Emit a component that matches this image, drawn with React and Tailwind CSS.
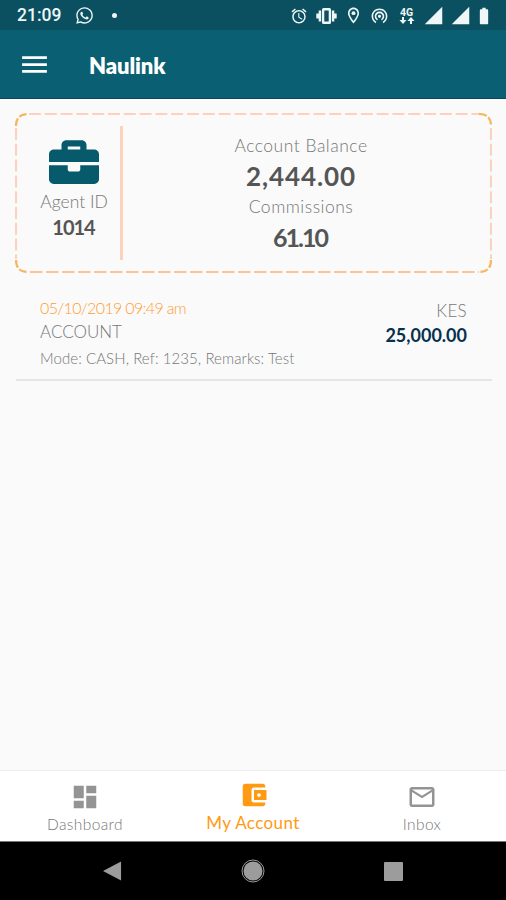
import { FaBriefcase, FaWhatsapp } from "react-icons/fa";
import {
  MdAccountBalanceWallet,
  MdAlarm,
  MdBatteryFull,
  MdDashboard,
  MdMenu,
  MdOutlineLocationOn,
  MdOutlineMail,
  MdSignalCellular4Bar,
  MdWifiTethering,
} from "react-icons/md";

function StatusBar() {
  return (
    <div className="flex h-[30px] items-center justify-between bg-[#0a5060] pt-[1px] pl-[17px] pr-[12px] text-[#eef6f7]">
      <div className="flex items-center">
        <span className="font-[Roboto] text-[17.5px] font-medium">21:09</span>
        <FaWhatsapp className="ml-[14px] size-[19px]" />
        <span className="ml-[18px] size-[5px] rounded-full bg-current" />
      </div>
      <div className="flex items-center">
        <MdAlarm className="size-[18px]" />
        <svg viewBox="0 0 21 16" className="ml-[8px] h-[16px] w-[21px]" fill="currentColor">
          <path d="M7.5 0h6q1.5 0 1.5 1.5v13q0 1.5-1.5 1.5h-6Q6 16 6 14.500v-13Q6 0 7.500 0zM8.300 2.500v11h4.400v-11z" fillRule="evenodd" />
          <path d="M2.700 2.500h2.500v11H2.700zM0.300 5.500h3v5h-3zM15.800 2.500h2.500v11h-2.500zM17.700 5.500h3v5h-3z" />
        </svg>
        <MdOutlineLocationOn className="ml-[7px] size-[19px]" />
        <MdWifiTethering className="ml-[7px] size-[19px]" />
        <div className="ml-[9px] flex w-[17px] flex-col items-center font-[Roboto] text-[10.5px] leading-[9px] font-bold">
          <span>4G</span>
          <svg viewBox="0 0 16 7" className="h-[7px] w-[16px]" fill="currentColor">
            <path d="M3 0h2v3h2.500L4 7 .5 3H3zM11 7h2V4h2.500L12 0 8.500 4H11z" />
          </svg>
        </div>
        <MdSignalCellular4Bar className="ml-[8px] size-[21px]" />
        <MdSignalCellular4Bar className="ml-[6px] size-[21px]" />
        <MdBatteryFull className="ml-[3px] size-[20px]" />
      </div>
    </div>
  );
}

function Header() {
  return (
    <div className="flex h-[69px] items-center border-b border-[#08475a] bg-[#0a5f72] pl-[18px] pt-[1px] text-white">
      <MdMenu className="size-[33px]" />
      <h1 className="ml-[38px] pt-[2px] text-[22px] font-extrabold tracking-[-0.100px]">Naulink</h1>
    </div>
  );
}

function CardBorder() {
  return (
    <svg viewBox="0 0 477 160" className="absolute inset-0 size-full" fill="none" strokeWidth="2.2">
      <g stroke="#fdd2bd" strokeDasharray="12 3.800">
        <path d="M14 1H464" />
        <path d="M1 15V146" />
        <path d="M476 15V146" />
      </g>
      <path d="M15 159H464" stroke="#f8c49c" strokeDasharray="12.500 3.500" />
      <g stroke="#f4b65f" strokeDasharray="8 2">
        <path d="M1 13Q1 1 13 1" />
        <path d="M464 1Q476 1 476 13" />
        <path d="M1 147Q1 159 13 159" />
        <path d="M476 147Q476 159 464 159" />
      </g>
    </svg>
  );
}

function BalanceCard() {
  return (
    <div className="relative mr-[14px] ml-[15px] mt-[14px] flex h-[160px]">
      <CardBorder />
      <div className="flex w-[105px] flex-col items-center pl-[13px] pt-[24px]">
        <FaBriefcase className="size-[50px] text-[#07596c]" />
        <span className="mt-[3px] text-[17.5px] leading-[24px] font-light text-[#777]">Agent ID</span>
        <span className="pr-[1px] text-[20px] leading-[27px] font-bold tracking-[-1.600px] text-[#555]">
          <span className="tracking-[-1px]">1014</span>
        </span>
      </div>
      <div className="my-[13px] w-[3px] bg-[#fdd2bd]" />
      <div className="flex flex-1 flex-col items-center pr-[13px] pt-[21px] text-[#777]">
        <span className="text-[17.5px] leading-[24px] font-light tracking-[0.500px]">Account Balance</span>
        <span className="text-[26px] leading-[37px] font-bold tracking-[0.900px] text-[#555]">2,444.00</span>
        <span className="text-[17.5px] leading-[24px] font-light tracking-[0.500px]">Commissions</span>
        <span className="pr-[2px] text-[25px] leading-[36px] font-bold tracking-[-2px] text-[#555]">61.10</span>
      </div>
    </div>
  );
}

function Transaction() {
  return (
    <div className="mr-[14px] ml-[16px] mt-[23px] flex h-[85px] justify-between border-b-2 border-[#e5e5e5] pr-[25px] pl-[24px] text-[#777]">
      <div className="flex flex-col">
        <span className="text-[16px] leading-[24px] font-light tracking-[-0.650px] text-[#ff9d35]">05/10/2019 09:49 am</span>
        <span className="text-[17px] leading-[23px] font-light">ACCOUNT</span>
        <span className="mt-[2px] text-[15px] leading-[26px] font-light tracking-[0.080px]">Mode: CASH, Ref: 1235, Remarks: Test</span>
      </div>
      <div className="flex flex-col items-end pt-[3px]">
        <span className="text-[17px] leading-[24px] font-light tracking-[0.300px]">KES</span>
        <span className="text-[18px] leading-[24px] font-bold text-[#07304f]">25,000.00</span>
      </div>
    </div>
  );
}

function TabBar() {
  return (
    <div className="flex h-[71px] border-t border-[#eee] bg-white text-[#949494]">
      <div className="flex flex-1 flex-col items-center pt-[11px] pl-[1px]">
        <MdDashboard className="size-[30px]" />
        <span className="text-[15.5px] leading-[24px] font-light tracking-[0.400px] text-[#777]">Dashboard</span>
      </div>
      <div className="flex flex-1 flex-col items-center pt-[9px] text-[#ff9a12]">
        <MdAccountBalanceWallet className="ml-[2px] size-[30px]" />
        <span className="mt-[1px] text-[17px] leading-[24px] tracking-[0.400px]">My Account</span>
      </div>
      <div className="flex flex-1 flex-col items-center pt-[11px] pl-[1px]">
        <MdOutlineMail className="size-[30px]" />
        <span className="text-[15.5px] leading-[24px] font-light tracking-[0.400px] text-[#777]">Inbox</span>
      </div>
    </div>
  );
}

function NavBar() {
  return (
    <div className="flex h-[59px] items-center justify-between border-t border-[#777] bg-black px-[103px]">
      <svg viewBox="0 0 20 22" className="h-[22px] w-[19px]" fill="#9c9c9c">
        <path d="M0 11 19 1v20z" />
      </svg>
      <svg viewBox="0 0 24 24" className="size-[24px]">
        <circle cx="12" cy="12" r="11" fill="none" stroke="#9c9c9c" />
        <circle cx="12" cy="12" r="9.500" fill="#9c9c9c" />
      </svg>
      <span className="size-[19px] rounded-[1px] bg-[#9c9c9c]" />
    </div>
  );
}

function App() {
  return (
    <div className="flex h-[900px] w-[506px] flex-col bg-[#fafafa] font-[Lato,sans-serif]">
      <StatusBar />
      <Header />
      <div className="flex-1">
        <BalanceCard />
        <Transaction />
      </div>
      <TabBar />
      <NavBar />
    </div>
  );
}

export default App;
